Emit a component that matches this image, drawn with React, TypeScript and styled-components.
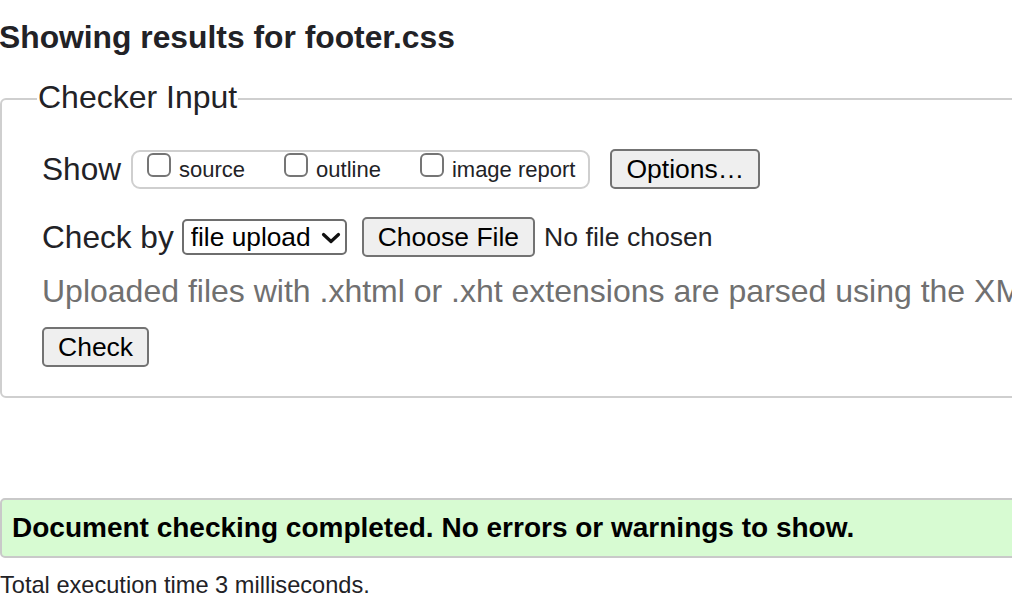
import React from "react";
import styled, { createGlobalStyle } from "styled-components";

const Global = createGlobalStyle`
  html, body {
    margin: 0;
    padding: 0;
    background: #ffffff;
    overflow: hidden;
  }
  body {
    font-family: "Liberation Sans", Arial, Helvetica, sans-serif;
    color: #222226;
  }
`;

const Page = styled.main`
  width: 1200px;
  display: flex;
  flex-direction: column;
`;

const Title = styled.h2`
  margin: 19px 0 0 -1px;
  font-size: 31.8px;
  line-height: 36px;
  font-weight: 700;
  color: #222226;
  white-space: nowrap;
`;

const Fieldset = styled.fieldset`
  margin: 24px 0 0 0;
  padding: 30px 0 29px 40px;
  border: 2px solid #cfcfcf;
  border-radius: 6px;
  min-width: 0;
  display: flex;
  flex-direction: column;
`;

const Legend = styled.legend`
  margin-left: -5px;
  padding: 0 1px 4px;
  font-size: 32px;
  line-height: 36px;
  color: #222226;
`;

const Row = styled.div<{ $mt?: number }>`
  display: flex;
  align-items: center;
  height: 40px;
  margin-top: ${(p) => p.$mt ?? 0}px;
  white-space: nowrap;
`;

const FieldLabel = styled.span<{ $mr: number }>`
  font-size: 31.6px;
  line-height: 36px;
  margin-right: ${(p) => p.$mr}px;
  color: #222226;
`;

const CheckGroup = styled.div`
  display: flex;
  align-items: center;
  gap: 39px;
  height: 39px;
  box-sizing: border-box;
  padding: 0 13px 0 14px;
  border: 2px solid #cfcfcf;
  border-radius: 9px;
`;

const CheckItem = styled.label`
  display: flex;
  align-items: center;
  gap: 8px;
  font-size: 22px;
  line-height: 25px;
  color: #222226;
`;

const Box = styled.input`
  appearance: none;
  -webkit-appearance: none;
  margin: 0 0 9px 0;
  width: 24px;
  height: 24px;
  box-sizing: border-box;
  border: 2px solid #757575;
  border-radius: 6px;
  background: #fff;
`;

const Button = styled.button<{ $ml?: number }>`
  height: 40px;
  box-sizing: border-box;
  margin: 0 0 0 ${(p) => p.$ml ?? 0}px;
  padding: 0 14px;
  border: 2px solid #737373;
  border-radius: 5px;
  background: #efefef;
  color: #000;
  font-family: "Liberation Sans", Arial, Helvetica, sans-serif;
  font-size: 26.5px;
  line-height: 36px;
`;

const SelectWrap = styled.div`
  position: relative;
  display: flex;
`;

const Select = styled.select`
  appearance: none;
  -webkit-appearance: none;
  width: 165px;
  height: 36px;
  box-sizing: border-box;
  padding: 0 0 0 7px;
  border: 2px solid #6e6e6e;
  border-radius: 5px;
  background: #fff;
  color: #000;
  font-family: "Liberation Sans", Arial, Helvetica, sans-serif;
  font-size: 26.3px;
  line-height: 32px;
`;

const Chevron = styled.svg`
  position: absolute;
  right: 6px;
  top: 13px;
  width: 20px;
  height: 12px;
  pointer-events: none;
`;

const FileStatus = styled.span`
  margin-left: 9px;
  font-size: 26.6px;
  line-height: 36px;
  color: #222226;
`;

const Note = styled.p`
  margin: 16px 0 18px 0;
  font-size: 32px;
  line-height: 36px;
  color: #707070;
  white-space: nowrap;
`;

const Success = styled.div`
  margin-top: 100px;
  padding: 12px 10px 12px;
  border: 2px solid #c9c9c9;
  border-radius: 5px;
  background: #d7fbd2;
  color: #000;
  font-size: 28px;
  line-height: 32px;
  font-weight: 700;
  white-space: nowrap;
`;

const Timing = styled.p`
  margin: 14px 0 0 0;
  font-size: 23.6px;
  line-height: 27px;
  color: #222226;
  white-space: nowrap;
`;

export default function App() {
  return (
    <>
      <Global />
      <Page>
        <Title>Showing results for footer.css</Title>
        <Fieldset>
          <Legend>Checker Input</Legend>
          <Row>
            <FieldLabel $mr={10}>Show</FieldLabel>
            <CheckGroup>
              <CheckItem>
                <Box type="checkbox" />
                source
              </CheckItem>
              <CheckItem>
                <Box type="checkbox" />
                outline
              </CheckItem>
              <CheckItem>
                <Box type="checkbox" />
                image report
              </CheckItem>
            </CheckGroup>
            <Button $ml={20}>Options…</Button>
          </Row>
          <Row $mt={28}>
            <FieldLabel $mr={8}>Check by</FieldLabel>
            <SelectWrap>
              <Select defaultValue="file">
                <option value="file">file upload</option>
              </Select>
              <Chevron viewBox="0 0 20 12">
                <path d="M2.5 2.5 L10 9.5 L17.5 2.5" fill="none" stroke="#111" strokeWidth="3.2" strokeLinecap="round" strokeLinejoin="round" />
              </Chevron>
            </SelectWrap>
            <Button $ml={15}>Choose File</Button>
            <FileStatus>No file chosen</FileStatus>
          </Row>
          <Note>Uploaded files with .xhtml or .xht extensions are parsed using the XML parser.</Note>
          <Row>
            <Button>Check</Button>
          </Row>
        </Fieldset>
        <Success>Document checking completed. No errors or warnings to show.</Success>
        <Timing>Total execution time 3 milliseconds.</Timing>
      </Page>
    </>
  );
}
